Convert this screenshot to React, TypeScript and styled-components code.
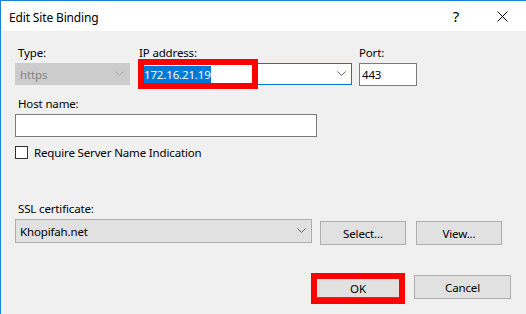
import React, { FC } from 'react';
import styled, { createGlobalStyle } from 'styled-components';

const GlobalStyle = createGlobalStyle`
  html, body {
    margin: 0;
    padding: 0;
    background: #f0f0f0;
  }
  * {
    box-sizing: border-box;
  }
`;

const Window = styled.div`
  width: 526px;
  height: 314px;
  display: flex;
  flex-direction: column;
  border-top: 1px solid #1883d7;
  border-left: 1px solid #1883d7;
  background: #f0f0f0;
  font-family: 'Noto Sans', 'Liberation Sans', sans-serif;
  font-size: 11.5px;
  letter-spacing: -0.15px;
  color: #000;
  overflow: hidden;
`;

const TitleBar = styled.div`
  height: 30px;
  flex: none;
  display: flex;
  align-items: center;
  padding-left: 8px;
  background: #fff;
`;

const Title = styled.div`
  flex: 1;
  padding-top: 2px;
  font-size: 12px;
`;

const TitleButton = styled.div<{ $width: number }>`
  width: ${(p) => p.$width}px;
  height: 30px;
  display: flex;
  align-items: center;
  justify-content: center;
  font-size: 15px;
`;

const Body = styled.div`
  flex: 1;
  display: flex;
  flex-direction: column;
  padding: 14px 0 0 14px;
`;

const Row = styled.div<{ $top?: number }>`
  display: flex;
  align-items: flex-start;
  margin-top: ${(p) => p.$top || 0}px;
`;

const Group = styled.div<{ $width: number; $left?: number }>`
  width: ${(p) => p.$width}px;
  margin-left: ${(p) => p.$left || 0}px;
  display: flex;
  flex-direction: column;
`;

const Label = styled.div<{ $indent?: number }>`
  line-height: 15px;
  height: 15px;
  padding-left: ${(p) => p.$indent || 0}px;
  margin-bottom: 3px;
  white-space: nowrap;
`;

const Combo = styled.div<{ $variant: 'disabled' | 'focused' | 'normal'; $height?: number }>`
  position: relative;
  height: ${(p) => p.$height || 22}px;
  display: flex;
  align-items: center;
  padding: 0 4px;
  border: 1px solid
    ${(p) => (p.$variant === 'disabled' ? '#cccccc' : p.$variant === 'focused' ? '#0078d7' : '#adadad')};
  background: ${(p) => (p.$variant === 'disabled' ? '#cccccc' : p.$variant === 'focused' ? '#fff' : '#e1e1e1')};
  color: ${(p) => (p.$variant === 'disabled' ? '#838383' : '#000')};
`;

const ComboText = styled.div`
  flex: 1;
  white-space: nowrap;
`;

const Selected = styled.span`
  background: #0078d7;
  color: #fff;
  padding: 1px 0;
`;

const Chevron = styled.svg`
  flex: none;
  margin-right: 1px;
`;

const Annotation = styled.div<{ $w: number; $h: number; $x: number; $y: number }>`
  position: absolute;
  left: ${(p) => p.$x}px;
  top: ${(p) => p.$y}px;
  width: ${(p) => p.$w}px;
  height: ${(p) => p.$h}px;
  border: 6px solid #ff0000;
  pointer-events: none;
`;

const TextBox = styled.div<{ $width: number }>`
  width: ${(p) => p.$width}px;
  height: 23px;
  display: flex;
  align-items: center;
  padding: 0 2px;
  border: 1px solid #7a7a7a;
  background: #fff;
`;

const CheckRow = styled.label`
  display: flex;
  align-items: center;
  margin-top: 9px;
  height: 13px;
`;

const CheckBox = styled.span`
  width: 13px;
  height: 13px;
  border: 1px solid #333;
  background: #fff;
  margin-right: 6px;
`;

const Button = styled.div<{ $width: number; $height?: number; $default?: boolean; $left?: number; $top?: number }>`
  width: ${(p) => p.$width}px;
  height: ${(p) => p.$height || 24}px;
  margin-left: ${(p) => p.$left || 0}px;
  margin-top: ${(p) => p.$top || 0}px;
  display: flex;
  align-items: center;
  justify-content: center;
  background: #e1e1e1;
  border: 1px solid #adadad;
  border-bottom-color: ${(p) => (p.$default ? '#0078d7' : '#adadad')};
  ${(p) => (p.$default ? 'border-top: none; border-left: none; border-right: none;' : '')}
`;

const Highlight = styled.div<{ $left?: number }>`
  border: 6px solid #ff0000;
  margin-left: ${(p) => p.$left || 0}px;
  display: flex;
`;

const ChevronIcon: FC<{ color: string }> = ({ color }) => (
  <Chevron width="9" height="6" viewBox="0 0 9 6">
    <path d="M0.5 0.5 L4.5 4.5 L8.5 0.5" fill="none" stroke={color} strokeWidth="1" />
  </Chevron>
);

export default function App() {
  return (
    <>
      <GlobalStyle />
      <Window>
        <TitleBar>
          <Title>Edit Site Binding</Title>
          <TitleButton $width={46}>?</TitleButton>
          <TitleButton $width={46}>
            <svg width="11" height="11" viewBox="0 0 11 11">
              <path d="M0.5 0.5 L10.5 10.5 M10.5 0.5 L0.5 10.5" stroke="#000" strokeWidth="1" />
            </svg>
          </TitleButton>
          <TitleButton $width={1} />
        </TitleBar>
        <Body>
          <Row>
            <Group $width={115}>
              <Label $indent={3}>Type:</Label>
              <Combo $variant="disabled">
                <ComboText>https</ComboText>
                <ChevronIcon color="#a6a6a6" />
              </Combo>
            </Group>
            <Group $width={213} $left={9}>
              <Label>IP address:</Label>
              <Combo $variant="focused">
                <ComboText>
                  <Selected>172.16.21.19</Selected>
                </ComboText>
                <ChevronIcon color="#606060" />
                <Annotation $x={-2} $y={-5} $w={120} $h={30} />
              </Combo>
            </Group>
            <Group $width={58} $left={7}>
              <Label>Port:</Label>
              <TextBox $width={58}>443</TextBox>
            </Group>
          </Row>
          <Row $top={10}>
            <Group $width={302}>
              <Label $indent={3}>Host name:</Label>
              <TextBox $width={302} />
            </Group>
          </Row>
          <CheckRow>
            <CheckBox />
            Require Server Name Indication
          </CheckRow>
          <Row $top={42}>
            <Group $width={297}>
              <Label $indent={3}>SSL certificate:</Label>
              <Combo $variant="normal" $height={24}>
                <ComboText>Khopifah.net</ComboText>
                <ChevronIcon color="#606060" />
              </Combo>
            </Group>
            <Button $width={86} $left={8} $top={20}>
              Select...
            </Button>
            <Button $width={86} $left={10} $top={20}>
              View...
            </Button>
          </Row>
          <Row $top={28}>
            <Highlight $left={296}>
              <Button $width={82} $height={19} $default>
                OK
              </Button>
            </Highlight>
            <Button $width={97} $left={9} $top={2}>
              Cancel
            </Button>
          </Row>
        </Body>
      </Window>
    </>
  );
}
